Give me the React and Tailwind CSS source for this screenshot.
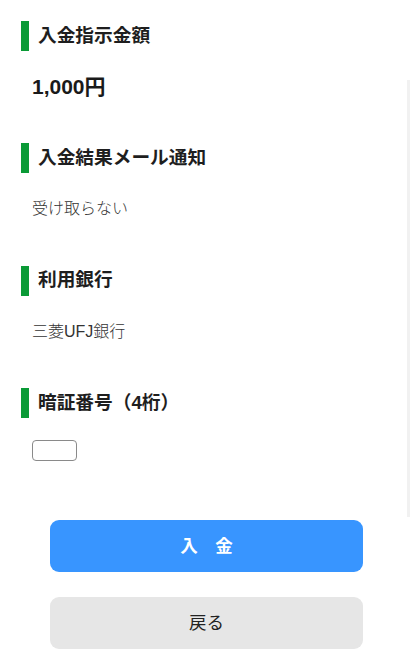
const font = { fontFamily: '"Liberation Sans", "Noto Sans CJK JP", sans-serif' }

function Heading({ children, first }) {
  return (
    <div className={`flex items-center h-[30px] ml-[21px] border-l-[8px] border-[#0a9a36] pl-[9px] ${first ? 'mt-[21px]' : 'mt-[44.3px]'}`}>
      <h3 className="text-[18.7px] font-bold leading-none text-[#1e1e1e]">{children}</h3>
    </div>
  )
}

export default function App() {
  return (
    <div className="relative w-[413px] h-[672px] bg-white overflow-hidden" style={font}>
      <div className="absolute right-[3px] top-[80px] w-[3px] h-[437px] bg-[#f1f1f1]" />

      <Heading first>入金指示金額</Heading>
      <p className="mt-[24px] ml-[32px] h-[24px] leading-[24px] text-[21px] font-bold text-[#1a1a1a]">1,000円</p>

      <Heading>入金結果メール通知</Heading>
      <p className="mt-[24px] ml-[32px] h-[24px] leading-[24px] text-[16px] font-light text-[#333]">受け取らない</p>

      <Heading>利用銀行</Heading>
      <p className="mt-[24px] ml-[32px] h-[24px] leading-[24px] text-[16px] font-light text-[#333]">三菱UFJ銀行</p>

      <Heading>暗証番号（4桁）</Heading>
      <input
        type="password"
        maxLength={4}
        className="block mt-[22px] ml-[32px] w-[45px] h-[21px] rounded-[4px] border border-[#8a8a8a] bg-white outline-none"
      />

      <div className="mx-[50px] mt-[59px] flex flex-col gap-[25px]">
        <button className="h-[52px] rounded-[9px] bg-[#3895ff] text-white text-[17.5px] font-bold">
          入　金
        </button>
        <button className="h-[52px] rounded-[9px] bg-[#e6e6e6] text-[#222] text-[17.5px]">
          戻る
        </button>
      </div>
    </div>
  )
}
